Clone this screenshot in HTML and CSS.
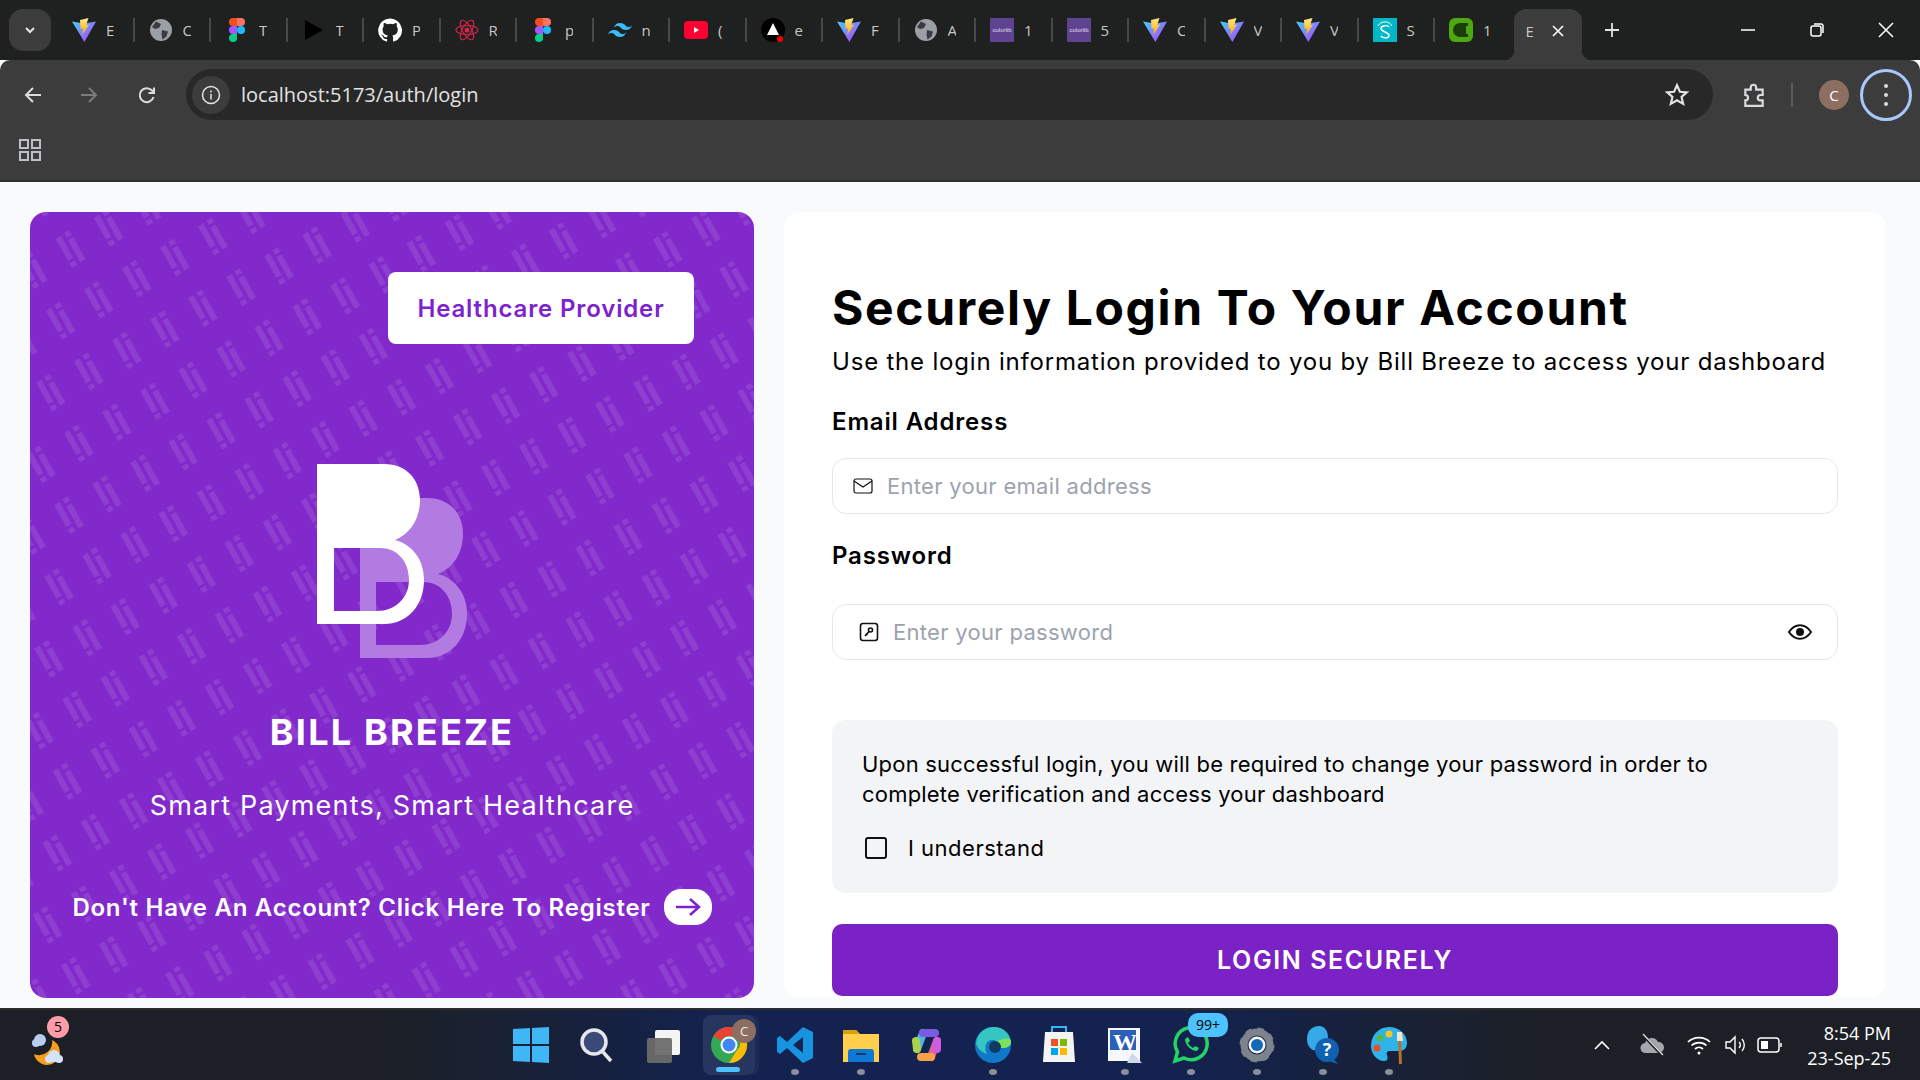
FILE: index.html
```html
<!DOCTYPE html>
<html>
<head>
    <title>Bill Breeze - Login</title>
    <link rel="stylesheet" href="styles.css">
</head>
<body>
    <!-- shared favicons -->
    <svg class="defs" width="0" height="0">
        <defs>
            <linearGradient id="vite-a" x1="0" y1="0" x2="1" y2="1"><stop offset="0" stop-color="#41d1ff"/><stop offset="1" stop-color="#bd34fe"/></linearGradient>
            <linearGradient id="vite-b" x1="0" y1="0" x2="0" y2="1"><stop offset="0" stop-color="#ffea83"/><stop offset="1" stop-color="#ffa800"/></linearGradient>
            <symbol id="vite" viewBox="0 0 24 24">
                <path d="M0 3.500 12 5.500 24 3.500 12.400 24Z" fill="url(#vite-a)"/>
                <path d="M16.500 0 8 2 8.600 11 11 10.600 10.400 17 17 6.500 14.200 7Z" fill="url(#vite-b)"/>
            </symbol>
            <symbol id="globe" viewBox="0 0 24 24">
                <circle cx="12" cy="12" r="11" fill="#9aa0a6"/>
                <path d="M7 3.500 12 6 10 10 6 11 3 9ZM13 12l6 1.500-1.500 5-4 3-1-5Z" fill="#3a3b3c"/>
            </symbol>
            <symbol id="figma" viewBox="0 0 16 24">
                <path d="M0 4a4 4 0 0 1 4-4h4v8H4a4 4 0 0 1-4-4Z" fill="#f24e1e"/>
                <path d="M8 0h4a4 4 0 0 1 0 8H8Z" fill="#ff7262"/>
                <path d="M0 12a4 4 0 0 1 4-4h4v8H4a4 4 0 0 1-4-4Z" fill="#a259ff"/>
                <circle cx="12" cy="12" r="4" fill="#1abcfe"/>
                <path d="M0 20a4 4 0 0 1 4-4h4v4a4 4 0 0 1-8 0Z" fill="#0acf83"/>
            </symbol>
            <symbol id="colorlib" viewBox="0 0 24 24">
                <rect width="24" height="24" fill="#5e4490"/>
                <text x="12" y="14" class="colorlib-mark">colorlib</text>
            </symbol>
        </defs>
    </svg>

    <div class="tabstrip">
        <button class="tab-search">
            <svg width="14" height="14" viewBox="0 0 14 14"><path d="M3 5l4 4 4-4" fill="none" stroke="#e3e3e3" stroke-width="2"/></svg>
        </button>
        <div class="tabs">
            <div class="tab"><svg class="fav" viewBox="0 0 24 24"><use href="#vite"/></svg><span class="tab-name">E</span></div>
            <div class="tab"><svg class="fav" viewBox="0 0 24 24"><use href="#globe"/></svg><span class="tab-name">C</span></div>
            <div class="tab"><svg class="fav" viewBox="0 0 16 24"><use href="#figma"/></svg><span class="tab-name">T</span></div>
            <div class="tab"><svg class="fav" viewBox="0 0 24 24"><path d="M3 2l18 10L3 22Z" fill="#000"/></svg><span class="tab-name">T</span></div>
            <div class="tab"><svg class="fav" viewBox="0 0 24 24"><path d="M12 .5a11.800 11.800 0 0 0-3.700 23c.6.1.8-.3.8-.6v-2c-3.300.7-4-1.600-4-1.600-.5-1.400-1.300-1.800-1.300-1.800-1.100-.7.1-.7.1-.7 1.200.1 1.800 1.200 1.800 1.200 1.100 1.800 2.800 1.300 3.500 1 .1-.8.400-1.300.8-1.600-2.600-.3-5.400-1.300-5.400-5.900 0-1.300.5-2.400 1.200-3.200-.1-.3-.5-1.500.1-3.200 0 0 1-.3 3.300 1.200a11 11 0 0 1 6 0c2.300-1.500 3.300-1.200 3.300-1.200.6 1.700.2 2.900.1 3.200.8.800 1.200 1.900 1.200 3.200 0 4.600-2.800 5.600-5.500 5.900.4.400.8 1.100.8 2.200v3.300c0 .3.2.7.8.6A11.800 11.800 0 0 0 12 .5Z" fill="#fff"/></svg><span class="tab-name">P</span></div>
            <div class="tab"><svg class="fav" viewBox="0 0 24 24" fill="none" stroke="#d6254f" stroke-width="1.100"><ellipse cx="12" cy="12" rx="11" ry="4.500"/><ellipse cx="12" cy="12" rx="11" ry="4.500" transform="rotate(60 12 12)"/><ellipse cx="12" cy="12" rx="11" ry="4.500" transform="rotate(120 12 12)"/><circle cx="12" cy="12" r="2" fill="#d6254f"/></svg><span class="tab-name">R</span></div>
            <div class="tab"><svg class="fav" viewBox="0 0 16 24"><use href="#figma"/></svg><span class="tab-name">p</span></div>
            <div class="tab"><svg class="fav" viewBox="0 0 24 24"><path d="M12 5c-3.200 0-5.200 1.600-6 4.800 1.200-1.600 2.600-2.200 4.200-1.800.9.200 1.600.9 2.300 1.600 1.200 1.200 2.500 2.400 5.500 2.400 3.200 0 5.200-1.600 6-4.800-1.200 1.600-2.600 2.200-4.200 1.800-.9-.2-1.600-.9-2.300-1.600C16.300 6.200 15 5 12 5ZM6 12c-3.200 0-5.200 1.600-6 4.800 1.200-1.600 2.600-2.200 4.200-1.800.9.200 1.600.9 2.300 1.600C7.700 17.800 9 19 12 19c3.200 0 5.200-1.600 6-4.800-1.200 1.600-2.600 2.200-4.200 1.800-.9-.2-1.600-.9-2.300-1.600C10.300 13.200 9 12 6 12Z" fill="#38bdf8"/></svg><span class="tab-name">n</span></div>
            <div class="tab"><svg class="fav" viewBox="0 0 24 24"><rect y="3" width="24" height="18" rx="4" fill="#ff0033"/><path d="M10 9l5 3-5 3Z" fill="#fff"/></svg><span class="tab-name">(</span></div>
            <div class="tab"><svg class="fav" viewBox="0 0 24 24"><circle cx="12" cy="12" r="12" fill="#000"/><path d="M12 5l6 12H6Z" fill="#fff"/><circle cx="19" cy="21" r="3" fill="#f00"/></svg><span class="tab-name">e</span></div>
            <div class="tab"><svg class="fav" viewBox="0 0 24 24"><use href="#vite"/></svg><span class="tab-name">F</span></div>
            <div class="tab"><svg class="fav" viewBox="0 0 24 24"><use href="#globe"/></svg><span class="tab-name">A</span></div>
            <div class="tab"><svg class="fav" viewBox="0 0 24 24"><use href="#colorlib"/></svg><span class="tab-name">1</span></div>
            <div class="tab"><svg class="fav" viewBox="0 0 24 24"><use href="#colorlib"/></svg><span class="tab-name">5</span></div>
            <div class="tab"><svg class="fav" viewBox="0 0 24 24"><use href="#vite"/></svg><span class="tab-name">C</span></div>
            <div class="tab"><svg class="fav" viewBox="0 0 24 24"><use href="#vite"/></svg><span class="tab-name">V</span></div>
            <div class="tab"><svg class="fav" viewBox="0 0 24 24"><use href="#vite"/></svg><span class="tab-name">V</span></div>
            <div class="tab"><svg class="fav" viewBox="0 0 24 24"><rect width="24" height="24" fill="#00b7c7"/><path d="M16 9c-1-2-8-2-8 1.500S16 14 16 17.500 9 20 8 18" fill="none" stroke="#fff" stroke-width="1.500"/><path d="M5 8a8 8 0 0 1 14 0" fill="none" stroke="#fff"/></svg><span class="tab-name">S</span></div>
            <div class="tab"><svg class="fav" viewBox="0 0 24 24"><rect width="24" height="24" rx="6" fill="#4ca90f"/><path d="M19 5H11a7 7 0 0 0 0 14h8v-3h-2V8h2Z" fill="#1c3d0a"/></svg><span class="tab-name">1</span></div>
            <div class="tab tab-active"><span class="tab-name">E</span><svg class="tab-close" viewBox="0 0 12 12"><path d="M1 1l10 10M11 1 1 11" stroke="#fff" stroke-width="1.600"/></svg></div>
            <svg class="tab-new" viewBox="0 0 16 16"><path d="M8 1v14M1 8h14" stroke="#e3e3e3" stroke-width="1.800"/></svg>
        </div>
        <div class="win-btns">
            <svg class="win-btn" viewBox="0 0 16 16"><path d="M1 8h14" stroke="#fff" stroke-width="1.500"/></svg>
            <svg class="win-btn" viewBox="0 0 16 16" fill="none" stroke="#fff" stroke-width="1.500"><rect x="2" y="4" width="10" height="10" rx="2"/><path d="M5 2h7a2 2 0 0 1 2 2v7"/></svg>
            <svg class="win-btn" viewBox="0 0 16 16"><path d="M1 1l14 14M15 1 1 15" stroke="#fff" stroke-width="1.500"/></svg>
        </div>
    </div>

    <div class="toolbar">
        <div class="nav-row">
            <svg class="nav-icon" viewBox="0 0 20 20" fill="none" stroke="#dadce0" stroke-width="2"><path d="M18 10H3M10 3l-7 7 7 7"/></svg>
            <svg class="nav-icon" viewBox="0 0 20 20" fill="none" stroke="#7b7c7d" stroke-width="2"><path d="M2 10h15M10 3l7 7-7 7"/></svg>
            <svg class="nav-icon nav-reload" viewBox="0 0 20 20" fill="none" stroke="#dadce0" stroke-width="2"><path d="M16.500 12a7 7 0 1 1-1.500-6.500L17 8M17 2.500V8h-5.500"/></svg>
            <div class="omnibox">
                <span class="site-info"><svg width="20" height="20" viewBox="0 0 20 20" fill="none" stroke="#e3e3e3" stroke-width="1.500"><circle cx="10" cy="10" r="8.500"/><path d="M10 9v5.500M10 5.500v2"/></svg></span>
                <span class="url">localhost:5173/auth/login</span>
                <svg class="star" viewBox="0 0 24 24" fill="none" stroke="#e3e3e3" stroke-width="2"><path d="M12 3l2.700 6 6.300.6-4.800 4.200 1.500 6.400L12 16.800l-5.700 3.400 1.500-6.400L3 9.600 9.300 9Z"/></svg>
            </div>
            <svg class="ext-icon" viewBox="0 0 24 24" fill="none" stroke="#dadce0" stroke-width="2"><path d="M4 7h5V5a2.500 2.500 0 0 1 5 0v2h6v5h-2a2.500 2.500 0 0 0 0 5h2v5H4v-5a2.500 2.500 0 0 0 0-5Z"/></svg>
            <span class="tool-sep"></span>
            <span class="avatar">C</span>
            <span class="menu-ring"><i></i><i></i><i></i></span>
        </div>
        <div class="bookmarks">
            <svg width="22" height="22" viewBox="0 0 22 22" fill="none" stroke="#bdc1c6" stroke-width="2"><rect x="1" y="1" width="8" height="8"/><rect x="13" y="1" width="8" height="8"/><rect x="1" y="13" width="8" height="8"/><rect x="13" y="13" width="8" height="8"/></svg>
        </div>
    </div>

    <main class="page">
        <section class="brand-panel">
            <svg class="brand-pattern" width="100%" height="100%">
                <defs>
                    <pattern id="li" width="43.500" height="58" patternUnits="userSpaceOnUse" patternTransform="translate(25.400 26) rotate(-29)">
                        <rect x="0" y="1" width="6" height="25"/>
                        <rect x="0" y="29" width="6" height="5"/>
                        <rect x="10" y="0" width="6" height="5"/>
                        <rect x="10" y="8" width="6" height="25"/>
                    </pattern>
                </defs>
                <rect width="100%" height="100%" fill="url(#li)"/>
            </svg>
            <div class="provider-row">
                <button class="provider-btn">Healthcare Provider</button>
            </div>
            <svg class="brand-logo" width="150" height="194" viewBox="0 0 150 194">
                <path transform="translate(43 34)" fill="#b27be2" fill-rule="evenodd" d="M0 0H67C90 0 103 16 103 36 103 55 93 70 78 76 96 81 107 96 107 116 107 142 90 160 67 160H0ZM16 84V147H60C78 147 92 134 92 116 92 97 80 84 63 84Z"/>
                <path fill="#fff" fill-rule="evenodd" d="M0 0H67C90 0 103 16 103 36 103 55 93 70 78 76 96 81 107 96 107 116 107 142 90 160 67 160H0ZM17 84V147H60C78 147 92 134 92 116 92 97 80 84 63 84Z"/>
            </svg>
            <h2 class="brand-name">BILL BREEZE</h2>
            <p class="brand-tag">Smart Payments, Smart Healthcare</p>
            <a class="register-link">
                <span>Don't Have An Account? Click Here To Register</span>
                <span class="register-arrow"><svg width="28" height="20" viewBox="0 0 28 20" fill="none" stroke="#7e22ce" stroke-width="2.500"><path d="M2 10h23M16 2l9 8-9 8"/></svg></span>
            </a>
        </section>

        <section class="login-panel">
            <h1 class="login-title">Securely Login To Your Account</h1>
            <p class="login-sub">Use the login information provided to you by Bill Breeze to access your dashboard</p>
            <label class="field-label">Email Address</label>
            <div class="field field-email">
                <svg width="20" height="16" viewBox="0 0 20 16" fill="none" stroke="#111" stroke-width="1.200"><rect x="1" y="1" width="18" height="14" rx="2"/><path d="M1 3l9 6 9-6"/></svg>
                <span class="placeholder">Enter your email address</span>
            </div>
            <label class="field-label field-label-pass">Password</label>
            <div class="field field-pass">
                <svg width="20" height="20" viewBox="0 0 20 20" fill="none" stroke="#111" stroke-width="1.600"><rect x="1.500" y="1.500" width="17" height="17" rx="2.500"/><circle cx="11.500" cy="8" r="2"/><path d="M10 9.500 6 14M7 11.500l1.500 1.500"/></svg>
                <span class="placeholder">Enter your password</span>
                <svg class="eye" width="26" height="18" viewBox="0 0 26 18" fill="none" stroke="#111" stroke-width="2"><path d="M2 9c6-9 16-9 22 0-6 9-16 9-22 0Z"/><circle cx="13" cy="9" r="3" fill="#111"/></svg>
            </div>
            <div class="notice">
                <p>Upon successful login, you will be required to change your password in order to complete verification and access your dashboard</p>
                <label class="understand"><span class="checkbox"></span>I understand</label>
            </div>
            <button class="login-btn">LOGIN SECURELY</button>
        </section>
    </main>

    <footer class="taskbar">
        <div class="tb-left">
            <span class="weather">
                <svg width="42" height="42" viewBox="0 0 42 42"><path d="M24 16a13 13 0 1 1-18 14 13 13 0 0 0 18-14Z" fill="#f59e1b"/><circle cx="12" cy="16" r="6" fill="#b9cdf2"/><circle cx="8" cy="19" r="4" fill="#b9cdf2"/><circle cx="26" cy="32" r="6" fill="#d4e2fa"/><circle cx="21" cy="35" r="4" fill="#d4e2fa"/><circle cx="31" cy="35" r="4" fill="#d4e2fa"/></svg>
                <span class="weather-badge">5</span>
            </span>
        </div>
        <div class="tb-center">
            <span class="tb-app"><svg width="36" height="36" viewBox="0 0 36 36"><path d="M0 2 17 1v16H0ZM19 1l17-1v17H19ZM0 19h17v16L0 34ZM19 19h17v17l-17-1Z" fill="#3fb6f5"/></svg></span>
            <span class="tb-app"><svg width="36" height="36" viewBox="0 0 36 36" fill="#3b4a78" stroke="#e6e8ee" stroke-width="3.500"><circle cx="15" cy="15" r="12"/><path d="M24 25l8 9" fill="none"/></svg></span>
            <span class="tb-app"><svg width="36" height="36" viewBox="0 0 36 36"><rect x="10" y="3" width="25" height="25" rx="2" fill="#f4f4f4"/><rect x="2" y="11" width="25" height="25" rx="2" fill="#6b6b6b" opacity=".95"/></svg></span>
            <span class="tb-app tb-app-open">
                <svg width="38" height="38" viewBox="0 0 38 38"><circle cx="19" cy="19" r="18" fill="#34a853"/><path d="M19 1a18 18 0 0 1 15.600 9H19a9 9 0 0 0-8 4.500L3.500 10A18 18 0 0 1 19 1Z" fill="#ea4335"/><path d="M34.600 10A18 18 0 0 1 19 37l8-13a9 9 0 0 0 0-14Z" fill="#fbbc04"/><circle cx="19" cy="19" r="8.500" fill="#fff"/><circle cx="19" cy="19" r="6.500" fill="#4285f4"/></svg>
                <span class="app-badge">C</span><i class="tb-active"></i>
            </span>
            <span class="tb-app tb-dot"><svg width="36" height="36" viewBox="0 0 36 36"><path d="M26 0 36 5V31L26 36 10 21 3 27 0 25V11L3 9 10 15ZM26 10 16 18 26 26Z" fill="#1793e0"/></svg></span>
            <span class="tb-app tb-dot"><svg width="36" height="36" viewBox="0 0 36 36"><path d="M0 3h13l4 4h19v28H0Z" fill="#ffd04d"/><path d="M0 3h13l3 4H0Z" fill="#d99e0b"/><path d="M5 35V25a3 3 0 0 1 3-3h20a3 3 0 0 1 3 3v10Z" fill="#0f78d4"/><rect x="13" y="26" width="10" height="2" fill="#083f70"/></svg></span>
            <span class="tb-app"><svg width="36" height="36" viewBox="0 0 36 36" fill="none" stroke-width="8" stroke-linecap="round"><path d="M8 22 14 6" stroke="#4fb3e8"/><path d="M8 22 7 14" stroke="#a8d34a"/><path d="M14 6h12" stroke="#7a5ce0"/><path d="M28 14 22 30" stroke="#e0609a"/><path d="M22 30h-10" stroke="#f7a14a"/><path d="M28 14v8" stroke="#d05be0"/></svg></span>
            <span class="tb-app tb-dot"><svg width="36" height="38" viewBox="0 0 36 38"><circle cx="18" cy="19" r="18" fill="#0f78c8"/><path d="M1 17C3 5 12 1 19 1c9 0 16 6 17 15 0 4-4 6-9 6-6 0-2-8-10-8-7 0-8 9-5 14-6-2-10-6-11-11Z" fill="#35c6c2"/><path d="M36 16c0 4-4 6-9 6-4 0-3-4-6-6 7-4 15-5 15 0Z" fill="#7fe060"/><circle cx="20" cy="21" r="6" fill="#12395f"/></svg></span>
            <span class="tb-app"><svg width="36" height="38" viewBox="0 0 36 38"><path d="M4 6h28l2 30H2Z" fill="#f4f4f4"/><path d="M11 6V1h14v5" fill="none" stroke="#38b6f0" stroke-width="2"/><rect x="10" y="13" width="7" height="7" fill="#f25022"/><rect x="19" y="13" width="7" height="7" fill="#7fba00"/><rect x="10" y="22" width="7" height="7" fill="#00a4ef"/><rect x="19" y="22" width="7" height="7" fill="#ffb900"/></svg></span>
            <span class="tb-app tb-dot"><svg width="36" height="36" viewBox="0 0 36 36"><rect x="1" y="1" width="32" height="33" fill="#f5f7fb"/><rect x="3" y="3" width="26" height="20" fill="#2b5fb8"/><path d="M20 36l5-10 10 10Z" fill="#cfd8ea"/></svg><span class="word-w">W</span></span>
            <span class="tb-app tb-dot"><svg width="38" height="38" viewBox="0 0 38 38" fill="none" stroke="#25d366" stroke-width="3.500"><path d="M3 35l2.500-9A16 16 0 1 1 12 32Z"/><path d="M13 13c0 6 6 12 12 12l2-3-4-2-2 2c-2-1-4-3-5-5l2-2-2-4Z" fill="#25d366" stroke="none"/></svg><span class="msg-badge">99+</span></span>
            <span class="tb-app tb-dot"><svg width="36" height="36" viewBox="0 0 36 36"><circle cx="18" cy="18" r="13" fill="none" stroke="#7d838c" stroke-width="7"/><circle cx="18" cy="18" r="15" fill="none" stroke="#7d838c" stroke-width="5" stroke-dasharray="6 5.800"/><circle cx="18" cy="18" r="8.500" fill="#f3f4f6"/><circle cx="18" cy="18" r="6" fill="#1668b8"/></svg></span>
            <span class="tb-app tb-dot"><svg width="36" height="38" viewBox="0 0 36 38"><path d="M14 0C7 0 2 5 2 13c0 5 2 9 6 11l6 1c6-2 9-7 9-13C23 5 20 0 14 0Z" fill="#37a8e8"/><circle cx="22" cy="24" r="12" fill="#0f62b0"/><path d="M28 32l5 6-10-3Z" fill="#0f62b0"/><text x="22" y="30" class="help-mark">?</text></svg></span>
            <span class="tb-app tb-dot"><svg width="36" height="38" viewBox="0 0 36 38"><path d="M18 1C7 1 0 10 0 20c0 8 6 15 13 15 4 0 4-3 3-6-1-2 0-4 3-4h9c5 0 8-3 8-8C36 8 28 1 18 1Z" fill="#2fb3ea"/><circle cx="18" cy="8" r="3.500" fill="#f7c325"/><circle cx="9" cy="12" r="3.500" fill="#53b848"/><circle cx="6" cy="22" r="3.500" fill="#e2502e"/><path d="M27 14h3l1 24h-3Z" fill="#b5722a"/><path d="M26 6h5l1 9h-6Z" fill="#f5e6c8"/></svg></span>
        </div>
        <div class="tb-right">
            <svg class="tray-caret" width="16" height="10" viewBox="0 0 16 10" fill="none" stroke="#fff" stroke-width="1.600"><path d="M1 9l7-7 7 7"/></svg>
            <svg class="tray-cloud" width="26" height="24" viewBox="0 0 26 24"><path d="M7 20a5 5 0 0 1-1-10 7 7 0 0 1 13-1 5.500 5.500 0 0 1 1 11Z" fill="#a4a7ad"/><path d="M4 2l19 20" stroke="#1c2026" stroke-width="3"/><path d="M4 1l20 21" stroke="#e6e6e6" stroke-width="1.200"/></svg>
            <svg class="tray-icon" width="24" height="22" viewBox="0 0 24 22" fill="none" stroke="#fff" stroke-width="1.700"><path d="M1 8a16 16 0 0 1 22 0M4.500 11.500a11 11 0 0 1 15 0M8 15a6 6 0 0 1 8 0"/><circle cx="12" cy="19" r="1.500" fill="#fff" stroke="none"/></svg>
            <svg class="tray-icon tray-speaker" width="24" height="22" viewBox="0 0 24 22" fill="none" stroke="#fff" stroke-width="1.400"><path d="M2 8v6h4l5 5V3L6 8ZM15 8a4 4 0 0 1 0 6M18 5a9 9 0 0 1 0 12"/></svg>
            <svg class="tray-icon" width="26" height="18" viewBox="0 0 26 18" fill="none" stroke="#fff" stroke-width="1.500"><rect x="1" y="2" width="21" height="14" rx="3"/><rect x="4" y="5" width="7" height="8" fill="#fff" stroke="none"/><path d="M24 7v4"/></svg>
            <div class="clock"><span>8:54 PM</span><span>23-Sep-25</span></div>
        </div>
    </footer>
</body>
</html>
```

FILE: styles.css
```css
/* Chrome window around a login page, with the Windows taskbar underneath. */
html, body {
    margin: 0;
    padding: 0;
    height: 100%;
    overflow: hidden;
}
body {
    display: flex;
    flex-direction: column;
    width: 1920px;
    height: 1080px;
    font-family: Inter, "Liberation Sans", sans-serif;
    background-color: #f9fafb;
}
button {
    border: 0;
    padding: 0;
    font: inherit;
}
.defs {
    position: absolute;
}
.colorlib-mark {
    fill: #e4dcf2;
    font-family: "Liberation Sans", sans-serif;
    font-size: 6px;
    text-anchor: middle;
}

/* Tab strip. */
.tabstrip {
    display: flex;
    align-items: center;
    flex: 0 0 60px;
    background-color: #1f2020;
    font-family: "Open Sans", sans-serif;
}
.tab-search {
    display: flex;
    align-items: center;
    justify-content: center;
    width: 42px;
    height: 42px;
    margin-left: 9px;
    margin-right: 7px;
    border-radius: 14px;
    background-color: #3c3c3c;
}
.tabs {
    display: flex;
    align-items: center;
    flex: 1;
    height: 60px;
}
.tab {
    display: flex;
    align-items: center;
    box-sizing: border-box;
    width: 76.500px;
    height: 24px;
    padding-left: 14px;
    border-right: 2px solid #46484a;
}
.fav {
    width: 24px;
    height: 24px;
    flex: none;
}
.tab-name {
    width: 8px;
    margin-left: 10px;
    overflow: hidden;
    color: #c7c7c7;
    font-size: 15px;
    line-height: 20px;
}
.tab:nth-child(19) {
    border-right: 0;
}
.tab-active {
    position: relative;
    align-self: flex-end;
    width: 68px;
    height: 51px;
    margin-left: 2px;
    padding-left: 12px;
    padding-bottom: 8px;
    border-right: 0;
    border-radius: 12px 12px 0 0;
    background-color: #3c3c3c;
}
.tab-active::before,
.tab-active::after {
    content: "";
    position: absolute;
    bottom: 0;
    width: 10px;
    height: 10px;
}
.tab-active::before {
    left: -10px;
    background: radial-gradient(circle at 0 0, #1f2020 10px, #3c3c3c 10.500px);
}
.tab-active::after {
    right: -10px;
    background: radial-gradient(circle at 100% 0, #1f2020 10px, #3c3c3c 10.500px);
}
.tab-active .tab-name {
    margin-left: 0;
}
.tab-close {
    width: 12px;
    height: 12px;
    margin-left: 18px;
}
.tab-new {
    width: 16px;
    height: 16px;
    margin-left: 22px;
}
.win-btns {
    display: flex;
    align-items: center;
    gap: 53px;
    padding-right: 26px;
}
.win-btn {
    width: 16px;
    height: 16px;
}

/* Toolbar and bookmarks. */
.toolbar {
    flex: 0 0 120px;
    border-bottom: 2px solid #2e2e2e;
    border-radius: 10px 10px 0 0;
    background-color: #3c3c3c;
    font-family: "Open Sans", sans-serif;
}
.nav-row {
    display: flex;
    align-items: center;
    height: 69px;
}
.nav-icon {
    width: 20px;
    height: 20px;
    margin-left: 23px;
    margin-right: 13px;
}
.nav-reload {
    margin-left: 25px;
    margin-right: 28px;
}
.omnibox {
    display: flex;
    align-items: center;
    box-sizing: border-box;
    width: 1527px;
    height: 51px;
    margin-left: 1px;
    padding-left: 6px;
    border-radius: 26px;
    background-color: #282828;
}
.site-info {
    display: flex;
    align-items: center;
    justify-content: center;
    width: 38px;
    height: 38px;
    border-radius: 50%;
    background-color: #3c3c3c;
}
.url {
    flex: 1;
    margin-left: 11px;
    color: #e3e3e3;
    font-size: 20px;
}
.star {
    width: 26px;
    height: 26px;
    margin-right: 23px;
}
.ext-icon {
    width: 26px;
    height: 26px;
    margin-left: 28px;
}
.tool-sep {
    width: 2px;
    height: 24px;
    margin-left: 24px;
    background-color: #5a5a5a;
}
.avatar {
    display: flex;
    align-items: center;
    justify-content: center;
    width: 30px;
    height: 30px;
    margin-left: 26px;
    border-radius: 50%;
    background-color: #8d6e63;
    color: #fff;
    font-size: 15px;
}
.menu-ring {
    display: flex;
    flex-direction: column;
    align-items: center;
    justify-content: center;
    gap: 5px;
    box-sizing: border-box;
    width: 52px;
    height: 52px;
    margin-left: 11px;
    border: 3px solid #a8c7fa;
    border-radius: 50%;
}
.menu-ring i {
    width: 4px;
    height: 4px;
    border-radius: 50%;
    background-color: #dadce0;
}
.bookmarks {
    height: 49px;
    padding: 10px 0 0 19px;
    box-sizing: border-box;
}

/* Page. */
.page {
    display: flex;
    flex: 1;
    gap: 30px;
    min-height: 0;
    padding: 30px 34px 10px 30px;
    box-sizing: border-box;
    color: #000;
}
.brand-panel {
    position: relative;
    display: flex;
    flex-direction: column;
    align-items: center;
    flex: 0 0 724px;
    box-sizing: border-box;
    border-radius: 16px;
    overflow: hidden;
    background-color: #8229cb;
    color: #fff;
}
.brand-pattern {
    position: absolute;
    top: 0;
    left: 0;
    fill: #fff;
    fill-opacity: 0.1;
}
.brand-pattern > rect {
    fill-opacity: 1;
}
.brand-panel > :not(.brand-pattern) {
    position: relative;
}
.provider-row {
    display: flex;
    justify-content: flex-end;
    width: 100%;
    box-sizing: border-box;
    padding: 60px 60px 0 0;
}
.provider-btn {
    width: 306px;
    height: 72px;
    border-radius: 8px;
    background-color: #fff;
    color: #7e22ce;
    font-size: 24px;
    font-weight: 600;
    letter-spacing: 0.85px;
}
.brand-logo {
    margin-top: 120px;
}
.brand-name {
    margin: 52px 0 0;
    font-size: 36px;
    font-weight: 700;
    line-height: 44px;
    letter-spacing: 2.2px;
}
.brand-tag {
    margin: 34px 0 0;
    font-size: 27px;
    line-height: 36px;
    letter-spacing: 1.2px;
}
.register-link {
    display: flex;
    align-items: center;
    gap: 13px;
    margin-top: 65px;
    font-size: 24px;
    font-weight: 600;
    letter-spacing: 0.75px;
}
.register-arrow {
    display: flex;
    align-items: center;
    justify-content: center;
    width: 48px;
    height: 36px;
    border-radius: 17px;
    background-color: #fff;
}

.login-panel {
    flex: 1;
    box-sizing: border-box;
    padding: 66px 48px 0 48px;
    border-radius: 16px;
    background-color: #fff;
}
.login-title {
    margin: 0;
    font-size: 48px;
    font-weight: 700;
    line-height: 60px;
    letter-spacing: 1.65px;
}
.login-sub {
    margin: 7px 0 0;
    font-size: 24px;
    line-height: 34px;
    letter-spacing: 0.8px;
}
.field-label {
    display: block;
    margin-top: 26px;
    font-size: 24px;
    font-weight: 600;
    line-height: 34px;
    letter-spacing: 0.85px;
}
.field-label-pass {
    margin-top: 25px;
}
.field {
    display: flex;
    align-items: center;
    box-sizing: border-box;
    height: 56px;
    border: 1px solid #e5e7eb;
    border-radius: 14px;
    color: #9ca3af;
    font-size: 22px;
    letter-spacing: 0.3px;
}
.field-email {
    padding-left: 20px;
    margin-top: 19px;
}
.field-pass {
    padding-left: 26px;
    margin-top: 31px;
}
.placeholder {
    flex: 1;
    margin-left: 14px;
}
.eye {
    margin-right: 24px;
}
.notice {
    box-sizing: border-box;
    height: 173px;
    margin-top: 60px;
    padding: 29px 30px 0;
    border-radius: 14px;
    background-color: #f3f4f6;
    font-size: 22px;
    line-height: 30px;
    letter-spacing: 0.5px;
}
.notice p {
    margin: 0;
    letter-spacing: 0.2px;
}
.understand {
    display: flex;
    align-items: center;
    margin-top: 24px;
}
.checkbox {
    width: 18px;
    height: 18px;
    margin-left: 3px;
    margin-right: 21px;
    border: 2px solid #111;
    border-radius: 3px;
}
.login-btn {
    width: 100%;
    height: 72px;
    margin-top: 31px;
    border-radius: 10px;
    background-color: #7a22c6;
    color: #fff;
    font-size: 25px;
    font-weight: 600;
    letter-spacing: 1.6px;
}

/* Taskbar. */
.taskbar {
    display: grid;
    grid-template-columns: 1fr auto 1fr;
    align-items: center;
    flex: 0 0 72px;
    box-sizing: border-box;
    border-top: 2px solid #2b2c2e;
    background: linear-gradient(90deg, #1c2026 20%, #13224f 38%, #13224f 62%, #1c2026 80%);
    font-family: "Open Sans", sans-serif;
}
.tb-left {
    padding-left: 28px;
}
.weather {
    position: relative;
    display: block;
    width: 42px;
    height: 42px;
}
.weather-badge {
    position: absolute;
    top: -8px;
    right: 1px;
    width: 22px;
    height: 22px;
    border-radius: 50%;
    background-color: #ff9ca8;
    color: #000;
    font-size: 14px;
    line-height: 22px;
    text-align: center;
}
.tb-center {
    display: flex;
    align-items: center;
}
.tb-app {
    position: relative;
    display: flex;
    align-items: center;
    justify-content: center;
    width: 66px;
    height: 60px;
}
.tb-app-open::before {
    content: "";
    position: absolute;
    top: 0;
    left: 7px;
    width: 52px;
    height: 60px;
    border-radius: 8px;
    background-color: #26365f;
    box-shadow: 4px 0 0 #1c2b55;
}
.tb-app-open svg {
    position: relative;
}
.tb-active {
    position: absolute;
    bottom: 3px;
    left: 20px;
    width: 24px;
    height: 5px;
    border-radius: 3px;
    background-color: #4cc2ff;
}
.tb-dot::after {
    content: "";
    position: absolute;
    bottom: 0;
    left: 29px;
    width: 8px;
    height: 6px;
    border-radius: 50%;
    background-color: #8a8f98;
}
.app-badge {
    position: absolute;
    top: 4px;
    right: 6px;
    width: 24px;
    height: 24px;
    border-radius: 50%;
    background-color: #8d6e63;
    color: #eee;
    font-size: 13px;
    line-height: 24px;
    text-align: center;
}
.word-w {
    position: absolute;
    top: 15px;
    left: 21px;
    color: #fff;
    font-family: "Liberation Serif", serif;
    font-size: 24px;
    font-weight: 700;
    line-height: 24px;
}
.msg-badge {
    position: absolute;
    top: -2px;
    left: 30px;
    width: 40px;
    height: 24px;
    border-radius: 10px;
    background-color: #4cc2ff;
    color: #000;
    font-size: 14px;
    line-height: 24px;
    text-align: center;
}
.help-mark {
    fill: #fff;
    font-size: 18px;
    font-weight: 700;
    text-anchor: middle;
}
.tb-right {
    display: flex;
    align-items: center;
    justify-content: flex-end;
    padding-right: 29px;
}
.tray-caret {
    margin-right: 29px;
}
.tray-cloud {
    margin-right: 22px;
}
.tray-icon {
    margin-right: 13px;
}
.tray-speaker {
    margin-right: 9px;
}
.clock {
    display: flex;
    flex-direction: column;
    align-items: flex-end;
    gap: 5px;
    margin-left: 11px;
    color: #fff;
    font-size: 18px;
    line-height: 20px;
}
```
